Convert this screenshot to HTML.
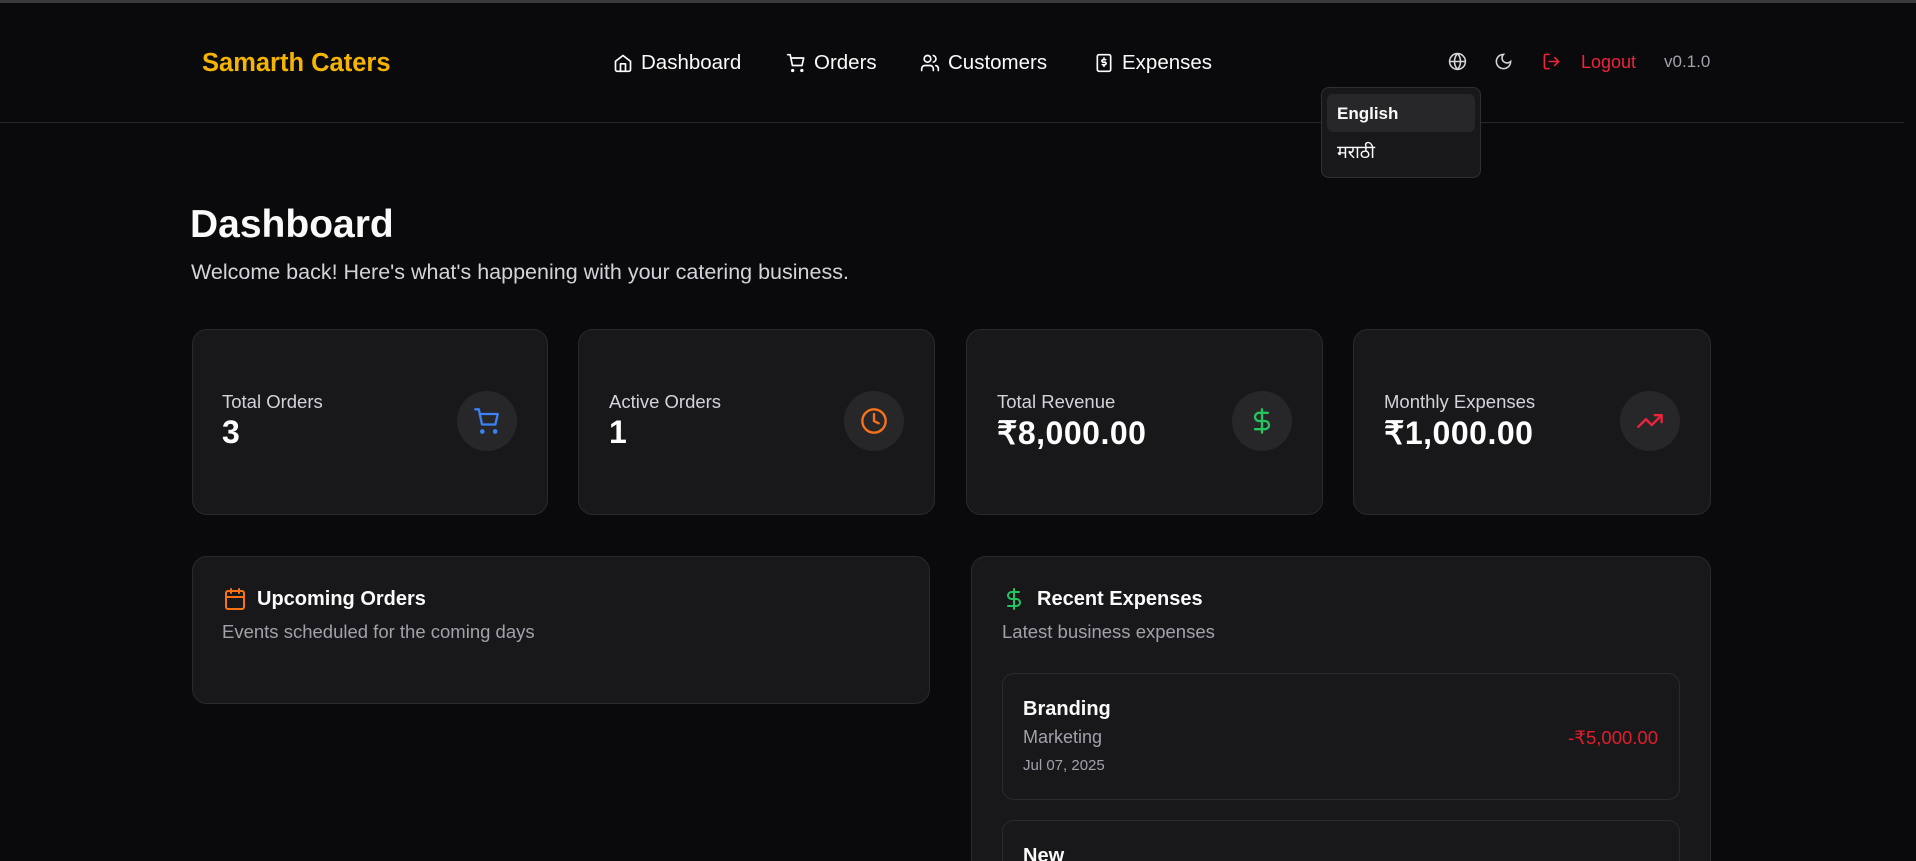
<!DOCTYPE html>
<html><head><meta charset="utf-8"><style>
*{box-sizing:border-box;margin:0;padding:0}
html,body{width:1916px;height:861px;overflow:hidden}
body{background:#0a0a0c;font-family:"Liberation Sans","Noto Sans CJK SC",sans-serif;color:#fafafa;position:relative}
#wrap{position:absolute;left:0;top:0;width:1916px;height:861px;overflow:hidden}
.abs{position:absolute}
.topline{left:0;top:0;width:1916px;height:3px;background:#3a3a3d}
.hline{left:0;top:122px;width:1904px;height:1px;background:#27272a}
.logo{left:202px;top:49px;font-size:25.5px;font-weight:bold;color:#f5b400}
.nav{top:51px;font-size:20.5px;color:#fafafa;display:flex;align-items:center;gap:8px}
.nav svg{width:20px;height:20px}
.card{background:#18181b;border:1px solid #2a2a2e;border-radius:15px}
.lbl{font-size:18.5px;color:#d4d4d8}
.val{font-size:32px;font-weight:bold;color:#fff;letter-spacing:0.5px}
.circ{width:60px;height:60px;border-radius:50%;background:#27272a;display:flex;align-items:center;justify-content:center}
.circ svg{width:28px;height:28px}
</style></head><body><div id="wrap">
<div class="abs topline"></div>
<div class="abs hline"></div>
<div class="abs logo">Samarth Caters</div>

<div class="abs nav" style="left:613px"><svg viewBox="0 0 24 24" fill="none" stroke="#fff" stroke-width="2" stroke-linecap="round" stroke-linejoin="round"><path d="M3 10l9-7 9 7v10a2 2 0 0 1-2 2H5a2 2 0 0 1-2-2z"/><path d="M9 22V13h6v9"/></svg>Dashboard</div>
<div class="abs nav" style="left:786px"><svg viewBox="0 0 24 24" fill="none" stroke="#fff" stroke-width="2" stroke-linecap="round" stroke-linejoin="round"><circle cx="8" cy="21" r="1"/><circle cx="19" cy="21" r="1"/><path d="M2 2h3l2.7 13h11.5l2-9H6"/></svg>Orders</div>
<div class="abs nav" style="left:920px"><svg viewBox="0 0 24 24" fill="none" stroke="#fff" stroke-width="2" stroke-linecap="round" stroke-linejoin="round"><circle cx="9" cy="7" r="4"/><path d="M2 21v-2a4 4 0 0 1 4-4h6a4 4 0 0 1 4 4v2"/><path d="M16 3.1a4 4 0 0 1 0 7.8M22 21v-2a4 4 0 0 0-3-3.9"/></svg>Customers</div>
<div class="abs nav" style="left:1094px"><svg viewBox="0 0 24 24" fill="none" stroke="#fff" stroke-width="2" stroke-linecap="round" stroke-linejoin="round"><rect x="4" y="2" width="16" height="20" rx="2"/><path d="M14 8h-3a1.5 1.5 0 0 0 0 3h2a1.5 1.5 0 0 1 0 3h-3M12 6v2M12 14v2"/></svg>Expenses</div>

<svg class="abs" style="left:1448px;top:52px" width="19" height="19" viewBox="0 0 24 24" fill="none" stroke="#d4d4d8" stroke-width="2"><circle cx="12" cy="12" r="10"/><path d="M2 12h20M12 2a15 15 0 0 1 0 20M12 2a15 15 0 0 0 0 20"/></svg>
<svg class="abs" style="left:1494px;top:52px" width="19" height="19" viewBox="0 0 24 24" fill="none" stroke="#d4d4d8" stroke-width="2" stroke-linecap="round"><path d="M12 3a6 6 0 0 0 9 9 9 9 0 1 1-9-9z"/></svg>
<svg class="abs" style="left:1542px;top:52px" width="19" height="19" viewBox="0 0 24 24" fill="none" stroke="#ef233c" stroke-width="2" stroke-linecap="round" stroke-linejoin="round"><path d="M9 21H5a2 2 0 0 1-2-2V5a2 2 0 0 1 2-2h4M16 17l5-5-5-5M21 12H9"/></svg>
<div class="abs" style="left:1581px;top:52px;font-size:18px;color:#ef233c">Logout</div>
<div class="abs" style="left:1664px;top:52px;font-size:17px;color:#a1a1aa">v0.1.0</div>

<div class="abs" style="left:1321px;top:87px;width:160px;height:91px;background:#18181b;border:1px solid #2f2f33;border-radius:8px"></div>
<div class="abs" style="left:1327px;top:94px;width:148px;height:38px;background:#27272a;border-radius:6px"></div>
<div class="abs" style="left:1337px;top:104px;font-size:17px;font-weight:bold">English</div>
<div class="abs" style="left:1337px;top:140px;font-size:18px">मराठी</div>

<div class="abs" style="left:190px;top:203px;font-size:39px;font-weight:bold">Dashboard</div>
<div class="abs" style="left:191px;top:260px;font-size:21.5px;color:#d4d4d8">Welcome back! Here's what's happening with your catering business.</div>

<div class="abs card" style="left:192px;top:329px;width:356px;height:186px"></div>
<div class="abs card" style="left:578px;top:329px;width:357px;height:186px"></div>
<div class="abs card" style="left:966px;top:329px;width:357px;height:186px"></div>
<div class="abs card" style="left:1353px;top:329px;width:358px;height:186px"></div>

<div class="abs lbl" style="left:222px;top:391px">Total Orders</div><div class="abs val" style="left:222px;top:414px">3</div>
<div class="abs lbl" style="left:609px;top:391px">Active Orders</div><div class="abs val" style="left:609px;top:414px">1</div>
<div class="abs lbl" style="left:997px;top:391px">Total Revenue</div><div class="abs val" style="left:997px;top:414px">₹8,000.00</div>
<div class="abs lbl" style="left:1384px;top:391px">Monthly Expenses</div><div class="abs val" style="left:1384px;top:414px">₹1,000.00</div>

<div class="abs circ" style="left:457px;top:391px"><svg viewBox="0 0 24 24" fill="none" stroke="#3b82f6" stroke-width="2" stroke-linecap="round" stroke-linejoin="round"><circle cx="8" cy="21" r="1"/><circle cx="19" cy="21" r="1"/><path d="M2 2h3l2.7 13h11.5l2-9H6"/></svg></div>
<div class="abs circ" style="left:844px;top:391px"><svg viewBox="0 0 24 24" fill="none" stroke="#f97316" stroke-width="2" stroke-linecap="round"><circle cx="12" cy="12" r="10"/><path d="M12 6v6l4 2"/></svg></div>
<div class="abs circ" style="left:1232px;top:391px"><svg viewBox="0 0 24 24" fill="none" stroke="#22c55e" stroke-width="2" stroke-linecap="round"><path d="M12 2v20M17 5H9.5a3.5 3.5 0 0 0 0 7h5a3.5 3.5 0 0 1 0 7H6"/></svg></div>
<div class="abs circ" style="left:1620px;top:391px"><svg viewBox="0 0 24 24" fill="none" stroke="#ef233c" stroke-width="2" stroke-linecap="round" stroke-linejoin="round"><path d="M22 7l-8.5 8.5-5-5L2 17M16 7h6v6"/></svg></div>

<div class="abs card" style="left:192px;top:556px;width:738px;height:148px"></div>
<svg class="abs" style="left:223px;top:587px" width="24" height="24" viewBox="0 0 24 24" fill="none" stroke="#f97316" stroke-width="2" stroke-linecap="round"><rect x="3" y="4" width="18" height="18" rx="2"/><path d="M16 2v4M8 2v4M3 10h18"/></svg>
<div class="abs" style="left:257px;top:588px;font-size:20px;font-weight:bold">Upcoming Orders</div>
<div class="abs" style="left:222px;top:621px;font-size:18.5px;color:#a1a1aa">Events scheduled for the coming days</div>

<div class="abs card" style="left:971px;top:556px;width:740px;height:400px"></div>
<svg class="abs" style="left:1002px;top:587px" width="24" height="24" viewBox="0 0 24 24" fill="none" stroke="#22c55e" stroke-width="2" stroke-linecap="round"><path d="M12 2v20M17 5H9.5a3.5 3.5 0 0 0 0 7h5a3.5 3.5 0 0 1 0 7H6"/></svg>
<div class="abs" style="left:1037px;top:588px;font-size:20px;font-weight:bold">Recent Expenses</div>
<div class="abs" style="left:1002px;top:621px;font-size:18.5px;color:#a1a1aa">Latest business expenses</div>

<div class="abs card" style="left:1002px;top:673px;width:678px;height:127px;border-radius:12px"></div>
<div class="abs" style="left:1023px;top:698px;font-size:20px;font-weight:bold">Branding</div>
<div class="abs" style="left:1023px;top:727px;font-size:18px;color:#a1a1aa">Marketing</div>
<div class="abs" style="left:1023px;top:757px;font-size:15px;color:#a1a1aa">Jul 07, 2025</div>
<div class="abs" style="right:258px;top:727px;font-size:18.5px;color:#e01e2d">-₹5,000.00</div>

<div class="abs card" style="left:1002px;top:820px;width:678px;height:127px;border-radius:12px"></div>
<div class="abs" style="left:1023px;top:845px;font-size:20px;font-weight:bold">New</div>
</div></body></html>
